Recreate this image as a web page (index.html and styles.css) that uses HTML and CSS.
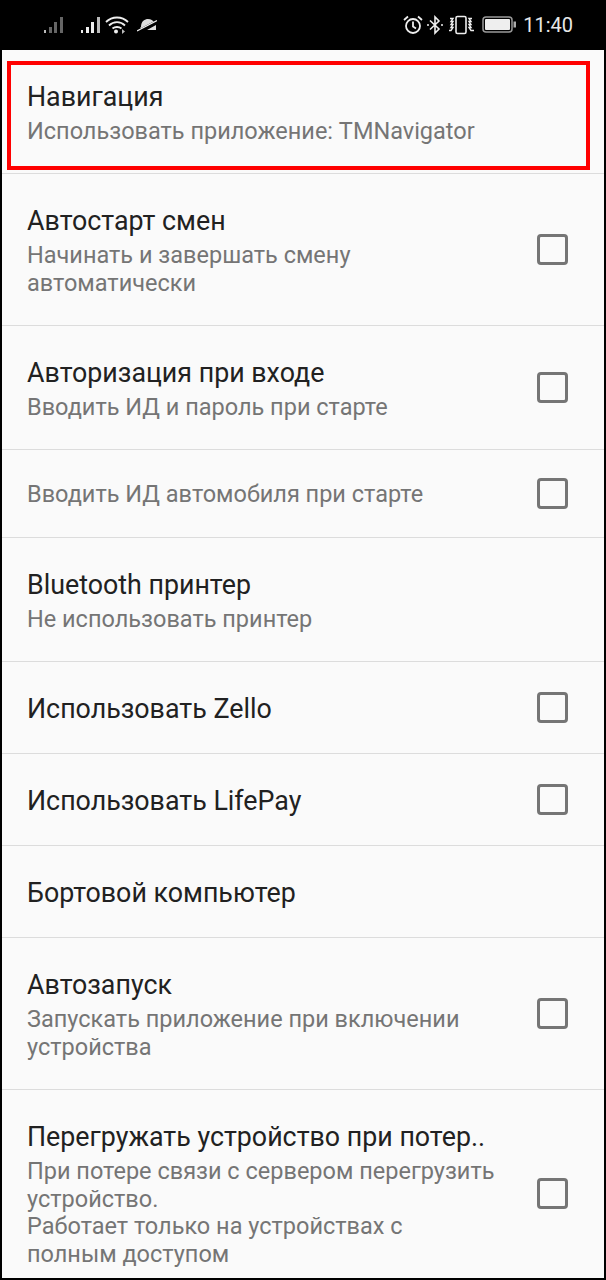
FILE: index.html
```html
<!DOCTYPE html>
<html lang="ru">
<head>
<meta charset="utf-8">
<title>Настройки</title>
<link rel="stylesheet" href="styles.css">
</head>
<body>
<div class="status">
  <div class="status-left">
    <svg class="ic sig" viewBox="0 0 22 18"><rect x="0" y="14" width="2" height="3" fill="#bbb"/><rect x="5" y="11" width="3" height="6" fill="#666"/><rect x="10" y="6" width="3" height="11" fill="#666"/><rect x="16" y="1" width="3" height="16" fill="#666"/></svg>
    <svg class="ic sig sig2" viewBox="0 0 22 18"><rect x="0" y="14" width="2" height="3" fill="#eee"/><rect x="5" y="11" width="3" height="6" fill="#eee"/><rect x="10" y="6" width="3" height="11" fill="#eee"/><rect x="16" y="1" width="3" height="16" fill="#bbb"/></svg>
    <svg class="ic wifi" viewBox="0 0 24 18"><path d="M1 6C7 0 17 0 23 6M4 9.500C8.500 5 15.500 5 20 9.500M7.500 12.500C10 10.500 14 10.500 16.500 12.500" fill="none" stroke="#eee" stroke-width="1.800"/><circle cx="11" cy="15.500" r="2" fill="#eee"/><path d="M17 13l3 2.500-3 2.500z" fill="#bbb"/></svg>
    <svg class="ic hat" viewBox="0 0 20 14"><path d="M4 9C4 3 8 1 11 1c3 0 5 1.500 6 3L7 10H3zM10 12l9-5v5z" fill="#ddd"/><path d="M0 13.500L20 3" stroke="#000" stroke-width="2.400"/><path d="M0 13L20 2.500" stroke="#eee" stroke-width="1.200"/></svg>
  </div>
  <div class="status-right">
    <svg class="ic alarm" viewBox="0 0 20 20"><circle cx="10" cy="11" r="7" fill="none" stroke="#eee" stroke-width="1.800"/><path d="M10 6.500V11.500L13 13.500M1 5L5 1.500M19 5L15 1.500" fill="none" stroke="#eee" stroke-width="1.800"/></svg>
    <svg class="ic bt" viewBox="0 0 16 20"><path d="M3 5.500L12 14 8 18V2l4 4L3 14.500" fill="none" stroke="#eee" stroke-width="1.600"/><path d="M0 10h2M14 10h2" stroke="#eee" stroke-width="1.600"/></svg>
    <svg class="ic vib" viewBox="0 0 26 20"><rect x="8" y="1.500" width="10" height="17" rx="1.500" fill="none" stroke="#eee" stroke-width="1.600"/><path d="M2 3.500h3l-2 3h2l-2 3h2l-2 3h2l-2 3H1M24 3.500h-3l2 3h-2l2 3h-2l2 3h-2l2 3h3" fill="none" stroke="#eee" stroke-width="1.400"/></svg>
    <svg class="ic batt" viewBox="0 0 35 18"><rect x="1" y="1" width="29" height="15" rx="3" fill="none" stroke="#999" stroke-width="1.500"/><rect x="3" y="3" width="25" height="11" rx="1" fill="#eee"/><rect x="31.500" y="5.500" width="2.500" height="6" fill="#aaa"/></svg>
    <span class="clock">11:40</span>
  </div>
</div>
<main class="list">
  <div class="highlight"></div>
  <div class="row row-nav"><div class="text"><div class="title">Навигация</div><div class="sub">Использовать приложение: TMNavigator</div></div></div>
  <div class="row row-two"><div class="text"><div class="title">Автостарт смен</div><div class="sub">Начинать и завершать смену<br>автоматически</div></div><span class="check"></span></div>
  <div class="row row-std"><div class="text"><div class="title">Авторизация при входе</div><div class="sub">Вводить ИД и пароль при старте</div></div><span class="check"></span></div>
  <div class="row row-sub"><div class="text"><div class="sub">Вводить ИД автомобиля при старте</div></div><span class="check"></span></div>
  <div class="row row-std"><div class="text"><div class="title">Bluetooth принтер</div><div class="sub">Не использовать принтер</div></div></div>
  <div class="row row-one"><div class="text"><div class="title">Использовать Zello</div></div><span class="check"></span></div>
  <div class="row row-one"><div class="text"><div class="title">Использовать LifePay</div></div><span class="check"></span></div>
  <div class="row row-one"><div class="text"><div class="title">Бортовой компьютер</div></div></div>
  <div class="row row-two"><div class="text"><div class="title">Автозапуск</div><div class="sub">Запускать приложение при включении<br>устройства</div></div><span class="check"></span></div>
  <div class="row row-last"><div class="text"><div class="title">Перегружать устройство при потер..</div><div class="sub">При потере связи с сервером перегрузить<br>устройство.<br>Работает только на устройствах с<br>полным доступом</div></div><span class="check"></span></div>
</main>
</body>
</html>
```
FILE: styles.css
```css
* { box-sizing: border-box; }
html, body { margin: 0; height: 1280px; background: #000; overflow: hidden; }
body { font-family: Roboto, "Noto Sans", sans-serif; display: flex; flex-direction: column; }
.status { height: 50px; display: flex; justify-content: space-between; align-items: center; padding: 0 33px 0 44px; color: #eee; }
.status-left, .status-right { display: flex; align-items: center; }
.ic { display: block; flex: none; }
.sig { width: 22px; height: 18px; }
.sig2 { margin-left: 15px; }
.wifi { width: 24px; height: 18px; margin-left: 2px; }
.hat { width: 20px; height: 14px; margin-left: 8px; }
.alarm { width: 20px; height: 20px; }
.bt { width: 16px; height: 20px; margin-left: 4px; }
.vib { width: 26px; height: 20px; margin-left: 5px; }
.batt { width: 35px; height: 18px; margin-left: 8px; }
.clock { font-size: 20px; margin-left: 6px; color: #e8e8e8; line-height: 24px; }
.list { position: relative; flex: none; height: 1228px; margin: 0 2px; background: #fafafa; overflow: hidden; }
.highlight { position: absolute; left: 5px; top: 11px; width: 583px; height: 109px; border: 4px solid #f00; pointer-events: none; }
.row { display: flex; align-items: center; padding: 0 22px 0 25px; border-bottom: 1px solid #dcdcdc; }
.row-nav { height: 124px; }
.row-two { height: 152px; }
.row-std { height: 124px; }
.row-sub { height: 88px; }
.row-one { height: 92px; }
.row-last { height: 206px; border-bottom: 0; }
.text { flex: 1; min-width: 0; padding-top: 3px; }
.row-one .text { padding-top: 7px; }
.title { font-size: 26.800px; line-height: 32px; color: #212121; white-space: nowrap; padding-bottom: 5px; }
.sub { font-size: 23.500px; line-height: 27.500px; color: #757575; }
.check { flex: none; width: 31px; height: 31px; margin: 0 14px 0 0; border: 3.500px solid #757575; border-radius: 4px; }
```
